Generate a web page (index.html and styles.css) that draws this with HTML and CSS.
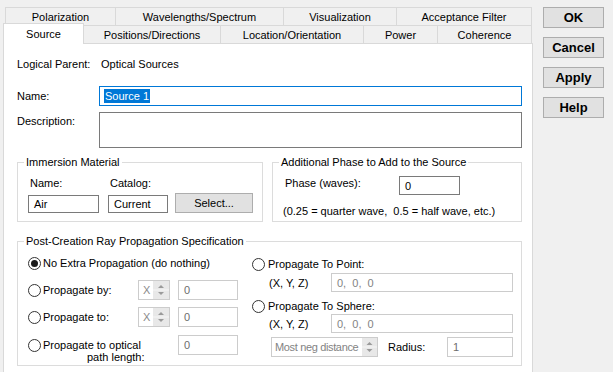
FILE: index.html
```html
<!DOCTYPE html>
<html>
<head>
<meta charset="utf-8">
<link rel="stylesheet" href="styles.css">
</head>
<body>
<div class="dialog">
  <div class="main">
    <div class="tabrow row1">
      <div class="tab w110">Polarization</div>
      <div class="tab w168">Wavelengths/Spectrum</div>
      <div class="tab w113">Visualization</div>
      <div class="tab w136 last">Acceptance Filter</div>
    </div>
    <div class="tabrow row2">
      <div class="tab sel">Source</div>
      <div class="tab w136 nol">Positions/Directions</div>
      <div class="tab w143">Location/Orientation</div>
      <div class="tab w74">Power</div>
      <div class="tab w95 last">Coherence</div>
    </div>
    <div class="panel">
      <div class="frow r-parent"><span class="lbl lp">Logical Parent:</span><span>Optical Sources</span></div>
      <div class="frow r-name"><span class="lbl">Name:</span><div class="txt focus"><span class="hl">Source 1</span></div></div>
      <div class="frow r-desc"><span class="lbl">Description:</span><div class="area"></div></div>

      <div class="groups">
        <fieldset class="g-imm">
          <legend>Immersion Material</legend>
          <div class="gbody imm">
            <div class="imm-labels"><span>Name:</span><span>Catalog:</span></div>
            <div class="imm-inputs">
              <div class="in in-air">Air</div>
              <div class="in in-cat">Current</div>
              <div class="btn-select">Select...</div>
            </div>
          </div>
        </fieldset>
        <fieldset class="g-phase">
          <legend>Additional Phase to Add to the Source</legend>
          <div class="gbody phase">
            <div class="ph-row"><span class="plbl">Phase (waves):</span><div class="in in-phase">0</div></div>
            <div class="hint">(0.25 = quarter wave,&nbsp; 0.5 = half wave, etc.)</div>
          </div>
        </fieldset>
      </div>

      <fieldset class="g-post">
        <legend>Post-Creation Ray Propagation Specification</legend>
        <div class="gbody post">
          <div class="pl">
            <div class="r1"><span class="radio on"></span><span>No Extra Propagation (do nothing)</span></div>
            <div class="prow a">
              <div class="rl"><span class="radio"></span><span>Propagate by:</span></div>
              <div class="spin"><span class="sx">X</span>
                <svg class="sa" width="16" height="18" viewBox="0 0 16 18"><rect width="16" height="18" fill="#e8e8e8"/><line x1="0" y1="9" x2="16" y2="9" stroke="#f6f6f6"/><path d="M5 7 L8 4 L11 7Z" fill="#9a9a9a"/><path d="M5 11 L8 14 L11 11Z" fill="#9a9a9a"/></svg>
              </div>
              <div class="din">0</div>
            </div>
            <div class="prow b">
              <div class="rl"><span class="radio"></span><span>Propagate to:</span></div>
              <div class="spin"><span class="sx">X</span>
                <svg class="sa" width="16" height="18" viewBox="0 0 16 18"><rect width="16" height="18" fill="#e8e8e8"/><line x1="0" y1="9" x2="16" y2="9" stroke="#f6f6f6"/><path d="M5 7 L8 4 L11 7Z" fill="#9a9a9a"/><path d="M5 11 L8 14 L11 11Z" fill="#9a9a9a"/></svg>
              </div>
              <div class="din">0</div>
            </div>
            <div class="prow c">
              <div class="rl4"><span class="radio"></span><div class="ltxt"><div>Propagate to optical</div><div class="l2">path length:</div></div></div>
              <div class="din d4">0</div>
            </div>
          </div>
          <div class="pr">
            <div class="r1"><span class="radio"></span><span>Propagate To Point:</span></div>
            <div class="xyz"><span class="xl">(X, Y, Z)</span><div class="xin">0,&nbsp; 0,&nbsp; 0</div></div>
            <div class="r1 r3"><span class="radio"></span><span>Propagate To Sphere:</span></div>
            <div class="xyz x2"><span class="xl">(X, Y, Z)</span><div class="xin">0,&nbsp; 0,&nbsp; 0</div></div>
            <div class="r5">
              <div class="combo"><span class="ct">Most neg distance</span>
                <svg class="sa" width="15" height="18" viewBox="0 0 15 18"><rect width="15" height="18" fill="#e8e8e8"/><line x1="0" y1="9" x2="15" y2="9" stroke="#f6f6f6"/><path d="M4.5 7 L7.5 4 L10.5 7Z" fill="#9a9a9a"/><path d="M4.5 11 L7.5 14 L10.5 11Z" fill="#9a9a9a"/></svg>
              </div>
              <span class="rad">Radius:</span>
              <div class="rin">1</div>
            </div>
          </div>
        </div>
      </fieldset>
    </div>
  </div>
  <div class="buttons">
    <div class="btn">OK</div>
    <div class="btn">Cancel</div>
    <div class="btn">Apply</div>
    <div class="btn">Help</div>
  </div>
</div>
</body>
</html>
```
FILE: styles.css
```css
* { box-sizing: border-box; }
html, body { margin: 0; padding: 0; }
body {
  background: #f0f0f0;
  font-family: "Liberation Sans", Arial, sans-serif;
  font-size: 11px;
  color: #000;
  width: 613px;
  height: 372px;
  overflow: hidden;
}
.dialog { display: flex; align-items: flex-start; padding-left: 3px; }
.main { width: 530px; margin-top: 7px; }

/* tabs */
.tabrow { display: flex; height: 18px; }
.row1 { margin-left: 2px; }
.tab {
  height: 18px;
  border-top: 1px solid #d9d9d9;
  border-left: 1px solid #d9d9d9;
  display: flex; align-items: center; justify-content: center;
  background: #f0f0f0;
  white-space: nowrap;
}
.tab.last { border-right: 1px solid #d9d9d9; }
.tab.nol { border-left: none; }
.tab.sel {
  width: 81px;
  height: 21px;
  margin-top: -2px;
  background: #fff;
  border-right: 1px solid #d9d9d9;
  position: relative;
  z-index: 2;
}
.w110 { width: 110px; }
.w168 { width: 168px; }
.w113 { width: 113px; }
.w136 { width: 136px; }
.w143 { width: 143px; }
.w74 { width: 74px; }
.w95 { width: 95px; }

.panel {
  background: #fff;
  border: 1px solid #d9d9d9;
  border-bottom: none;
  height: 330px;
  padding: 0 10px 0 13px;
}

/* top form */
.frow { display: flex; align-items: center; }
.lbl { width: 82px; flex: none; }
.lbl.lp { width: 84px; }
.r-parent { margin-top: 12px; height: 15px; }
.r-name { margin-top: 15px; }
.txt {
  width: 423px; height: 20px;
  border: 1px solid #0078d7;
  background: #fff;
  display: flex; align-items: center;
  padding-left: 4px;
}
.hl { background: #0078d7; color: #fff; padding: 0 1px; line-height: 14px; }
.r-desc { margin-top: 6px; align-items: flex-start; }
.r-desc .lbl { padding-top: 2px; line-height: 15px; }
.area { width: 423px; height: 36px; border: 1px solid #7a7a7a; background: #fff; }

/* groups */
.groups { display: flex; gap: 9px; margin-top: 7px; }
fieldset {
  margin: 0;
  padding: 0;
  border: 1px solid #dcdcdc;
  min-width: 0;
}
legend { padding: 0 2px; margin-left: 6px; line-height: 15px; height: 15px; }
.g-imm { width: 246px; }
.g-phase { width: 250px; }
.gbody { padding-left: 10px; }
.imm { padding-bottom: 8px; }
.imm-labels { display: flex; margin-top: 5px; height: 15px; align-items: center; }
.imm-labels span { width: 80px; padding-left: 2px; }
.imm-inputs { display: flex; align-items: flex-end; margin-top: 3px; }
.in {
  height: 18px;
  border: 1px solid #7a7a7a;
  background: #fff;
  display: flex; align-items: center;
  padding-left: 5px;
}
.in-air { width: 71px; }
.in-cat { width: 60px; margin-left: 9px; }
.btn-select {
  width: 78px; height: 20px; margin-left: 7px;
  background: #e1e1e1; border: 1px solid #adadad;
  display: flex; align-items: center; justify-content: center;
}
.ph-row { display: flex; align-items: flex-start; margin-top: 6px; padding-left: 2px; }
.plbl { width: 114px; line-height: 15px; margin-top: 0; }
.in-phase { width: 61px; height: 19px; }
.hint { margin-top: 9px; line-height: 15px; }

/* post creation */
.g-post { margin-top: 12px; width: 505px; }
.post { display: flex; padding-bottom: 2px; }
.pl { width: 210px; flex: none; }
.pr { width: 261px; margin-left: 14px; flex: none; }
.r1 { display: flex; align-items: center; height: 14px; margin-top: 7px; }
.pr .r1 { margin-top: 8px; }
.pr .r3 { margin-top: 7px; }
.radio {
  width: 13px; height: 13px; flex: none;
  border: 1px solid #333;
  border-radius: 50%;
  background: #fff;
  margin-right: 2px;
  position: relative;
}
.pr .radio { margin-right: 3px; }
.radio.on::after {
  content: "";
  position: absolute;
  left: 2px; top: 2px;
  width: 7px; height: 7px;
  border-radius: 50%;
  background: #1a1a1a;
}
.prow { display: flex; align-items: center; height: 20px; }
.prow.a { margin-top: 10px; }
.prow.b { margin-top: 7px; }
.prow.c { margin-top: 8px; align-items: flex-start; height: auto; }
.rl { width: 110px; display: flex; align-items: center; flex: none; }
.spin { width: 32px; height: 20px; border: 1px solid #ccc; display: flex; align-items: center; background: #fff; }
.sx { flex: 1; color: #8a8a8a; padding-left: 4px; }
.sa { display: block; flex: none; }
.din {
  width: 60px; height: 20px; margin-left: 8px;
  border: 1px solid #ccc; background: #fff;
  color: #6d6d6d; padding-left: 5px;
  display: flex; align-items: center;
}
.din.d4 { margin-left: 0; }
.rl4 { width: 150px; display: flex; align-items: flex-start; margin-top: 4px; flex: none; }
.ltxt { line-height: 12px; }
.l2 { padding-left: 44px; }
.xyz { display: flex; align-items: center; margin-top: 2px; padding-left: 17px; }
.xyz.x2 { margin-top: 1px; }
.xl { width: 62px; flex: none; }
.xin {
  width: 182px; height: 19px;
  border: 1px solid #ccc; background: #fff;
  color: #838383; padding-left: 5px;
  display: flex; align-items: center;
  white-space: pre;
}
.r5 { display: flex; align-items: center; margin-top: 4px; padding-left: 19px; }
.combo { width: 107px; height: 20px; border: 1px solid #ccc; display: flex; align-items: center; background: #fff; }
.ct { flex: 1; overflow: hidden; white-space: nowrap; color: #838383; padding-left: 3px; letter-spacing: -0.35px; }
.rad { margin-left: 10px; }
.rin {
  width: 66px; height: 20px; margin-left: auto;
  border: 1px solid #ccc; background: #fff;
  color: #6d6d6d; padding-left: 5px;
  display: flex; align-items: center;
}

/* buttons */
.buttons { margin-left: 10px; margin-top: 7px; display: flex; flex-direction: column; gap: 9px; }
.btn {
  width: 61px; height: 21px;
  background: #e1e1e1; border: 1px solid #adadad;
  font-weight: bold; font-size: 13px;
  display: flex; align-items: center; justify-content: center;
}
```
